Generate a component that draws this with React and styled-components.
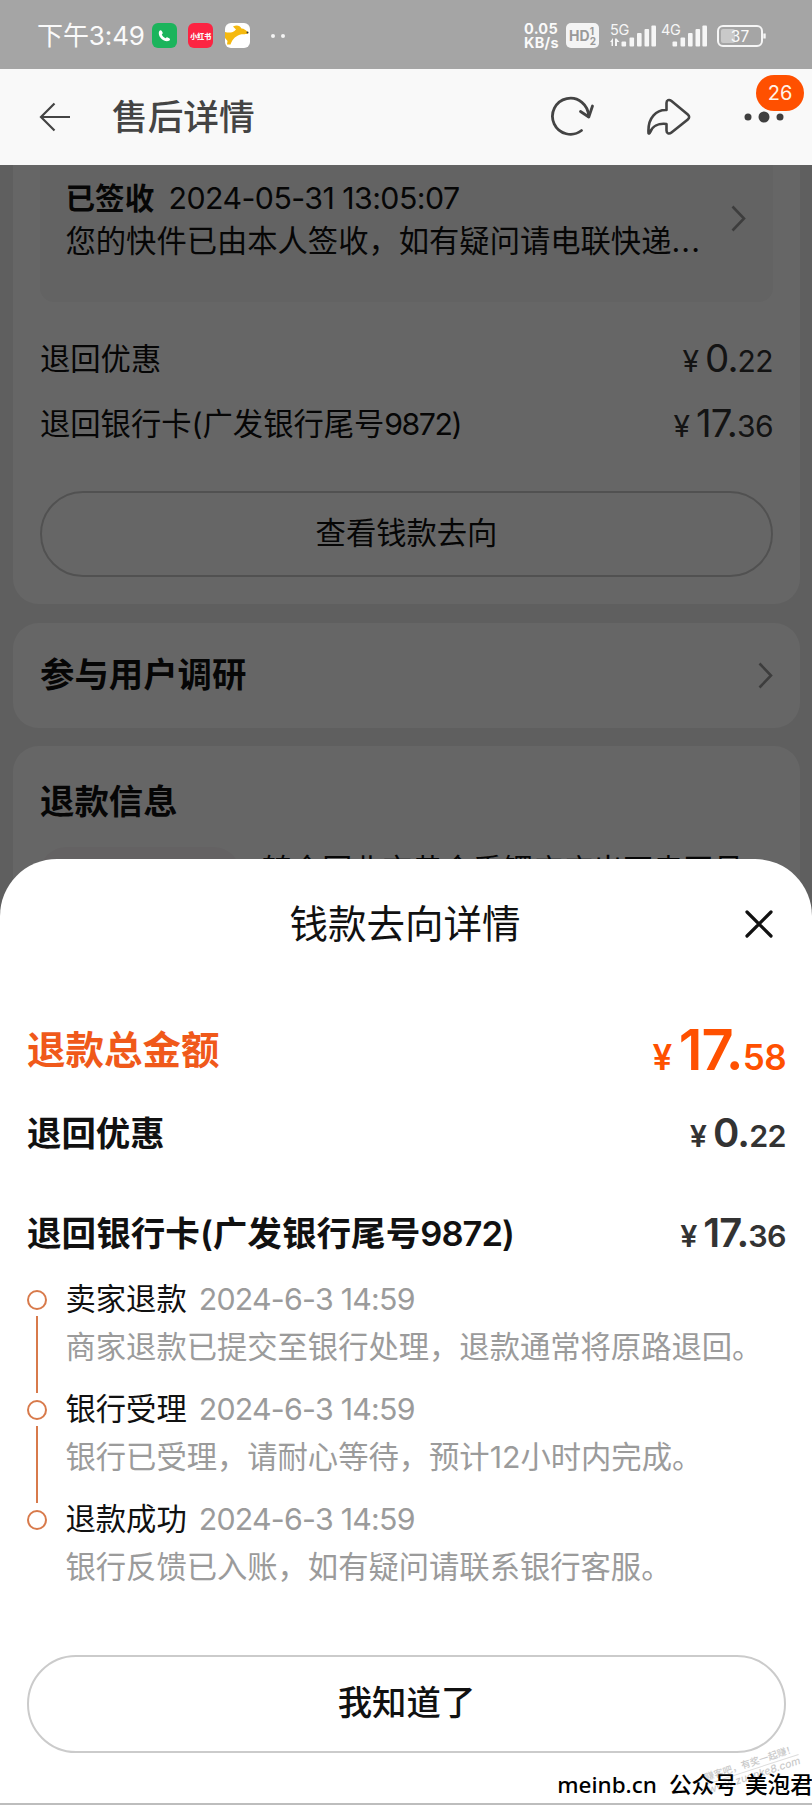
import React from "react";
import styled, { createGlobalStyle } from "styled-components";

const Colors = {
  white: "#fff",
  black: "#111",
  nav: "#444",
  grey: "#9b9b9b",
  price: "#333",
  orange: "#f0591a",
  badge: "#ff5000",
  line: "#d87a4b",
  border: "#cbcbcb"
};

const GlobalStyle = createGlobalStyle`
  * {
    box-sizing: border-box;
  }
  body {
    margin: 0;
    font-family: Inter, "Noto Sans CJK SC", sans-serif;
    color: ${Colors.black};
  }
  svg {
    display: block;
    flex: none;
  }
`;

const Screen = styled.div`
  position: relative;
  display: flex;
  flex-direction: column;
  width: 812px;
  height: 1805px;
  overflow: hidden;
  background: #eee;
`;

/* status bar */

const StatusBar = styled.header`
  display: flex;
  align-items: center;
  height: 69px;
  flex: none;
  padding: 2px 45px 0 37px;
  background: #a5a5a5;
  color: #fafafa;
`;

const Clock = styled.span`
  width: 115px;
  font-size: 26px;
  line-height: 30px;
  letter-spacing: -0.1px;
  white-space: nowrap;
`;

const AppIcon = styled.span`
  display: flex;
  align-items: center;
  justify-content: center;
  width: 25px;
  height: 25px;
  margin-right: 11.3px;
  border-radius: 6px;
  overflow: hidden;
  background: ${props => props.$bg};
  font-size: 7px;
  font-weight: 900;
  white-space: nowrap;
`;

const MoreApps = styled.span`
  display: flex;
  gap: 6px;
  margin-left: 10px;
  & i {
    width: 4px;
    height: 4px;
    border-radius: 50%;
    background: #f4f4f4;
  }
`;

const StatusRight = styled.div`
  display: flex;
  align-items: center;
  margin-left: auto;
`;

const NetSpeed = styled.span`
  display: flex;
  flex-direction: column;
  width: 36px;
  margin-right: 6px;
  font-size: 14.5px;
  font-weight: 700;
  line-height: 14px;
  letter-spacing: 0.3px;
  white-space: nowrap;
`;

const HdBadge = styled.span`
  display: flex;
  align-items: center;
  justify-content: center;
  width: 33px;
  height: 25px;
  margin-right: 11px;
  border-radius: 5px;
  background: #f4f4f4;
  color: #999;
  font-size: 14px;
  font-weight: 700;
  & small {
    font-size: 10px;
    line-height: 10px;
  }
`;

const Signals = styled.div`
  display: flex;
  gap: 5px;
  margin-right: 10px;
`;

/* nav bar */

const NavBar = styled.nav`
  display: flex;
  align-items: center;
  height: 96px;
  flex: none;
  padding: 0 28px 0 39px;
  background: #f9f9f9;
  color: ${Colors.nav};
`;

const NavTitle = styled.h1`
  margin: 0 0 0 41px;
  font-size: 35.7px;
  line-height: 48px;
  font-weight: 500;
`;

const NavActions = styled.div`
  display: flex;
  align-items: center;
  gap: 51px;
  margin-left: auto;
`;

const MoreButton = styled.div`
  position: relative;
  display: flex;
  align-items: center;
  width: 40px;
`;

const Badge = styled.span`
  position: absolute;
  left: 12px;
  bottom: 12px;
  width: 48px;
  height: 36px;
  border-radius: 18px;
  background: ${Colors.badge};
  color: #fff3e8;
  font-size: 20px;
  line-height: 36px;
  text-align: center;
`;

/* page under the mask */

const Content = styled.main`
  position: relative;
  display: flex;
  flex-direction: column;
  flex: 1;
  gap: 18.5px;
  min-height: 0;
  padding: 0 12px 0 13px;
  overflow: hidden;
`;

const Mask = styled.div`
  position: absolute;
  top: 0;
  right: 0;
  bottom: 0;
  left: 0;
  background: rgba(0, 0, 0, 0.6);
`;

const Card = styled.section`
  flex: none;
  height: ${props => props.$height}px;
  padding: 0 27px;
  border-radius: ${props => (props.$first ? "0 0 26px 26px" : "26px")};
  background: ${Colors.white};
`;

const Express = styled.div`
  display: flex;
  justify-content: space-between;
  height: 137px;
  padding: 12px 27px 0 25.5px;
  border-radius: 0 0 14px 14px;
  background: #f7f7f7;
  & svg {
    margin-top: 28px;
  }
`;

const ExpressText = styled.div`
  font-size: 30.3px;
  line-height: 43px;
  white-space: nowrap;
  & b {
    display: inline-block;
    width: 103px;
    font-size: 29.6px;
  }
  & span {
    letter-spacing: -0.55px;
  }
  & i {
    font-style: normal;
    letter-spacing: 1.2px;
  }
`;

const Row = styled.div`
  display: flex;
  align-items: center;
  justify-content: space-between;
  height: ${props => props.$height}px;
  padding-top: ${props => props.$offset || 0}px;
  font-size: ${props => props.$size || 30.3}px;
  font-weight: ${props => (props.$strong ? 600 : 400)};
  line-height: 50px;
  white-space: nowrap;
  color: ${props => props.$color || Colors.black};
  & em {
    font-style: normal;
    letter-spacing: ${props => (props.$strong ? "-1px" : "-1.5px")};
  }
`;

const ButtonOutline = styled.button`
  display: block;
  width: 100%;
  height: ${props => props.$height}px;
  margin-top: ${props => props.$top || 0}px;
  padding: 0 0 2px;
  border: 2px solid ${Colors.border};
  border-radius: 50px;
  background: transparent;
  font-family: inherit;
  font-size: ${props => props.$size}px;
  font-weight: ${props => (props.$strong ? 500 : 400)};
  line-height: 50px;
  color: ${Colors.black};
`;

const Product = styled.div`
  display: flex;
  gap: 22px;
  height: 200px;
`;

const Thumb = styled.div`
  width: 200px;
  height: 200px;
  border-radius: 26px;
  background: #faf6f7;
`;

const ProductName = styled.span`
  margin-top: 4px;
  font-size: 30.1px;
  line-height: 36px;
  white-space: nowrap;
`;

/* bottom sheet */

const Sheet = styled.section`
  position: absolute;
  left: 0;
  right: 0;
  bottom: 0;
  height: 946px;
  padding: 0 26px 0 27px;
  border-radius: 57px 57px 0 0;
  border-bottom: 2px solid #bdbdbd;
  background: ${Colors.white};
`;

const SheetHeader = styled.div`
  display: flex;
  align-items: center;
  justify-content: flex-end;
  height: 129px;
  padding-right: 12px;
  & h2 {
    flex: 1;
    margin: 0;
    padding-left: 39px;
    font-size: 38.5px;
    font-weight: 400;
    line-height: 50px;
    text-align: center;
  }
`;

const PriceText = styled.span`
  display: flex;
  align-items: baseline;
  margin-top: ${props => props.$drop || 0}px;
  color: ${props => props.$color || Colors.price};
  font-size: ${props => props.$small}px;
  font-weight: ${props => props.$weight || 400};
  line-height: 50px;
  letter-spacing: -0.6px;
  & i {
    margin-right: ${props => props.$gap || 6.5}px;
    font-style: normal;
  }
  & b {
    font-size: ${props => props.$big}px;
    font-weight: inherit;
    letter-spacing: -0.9px;
  }
`;

const Steps = styled.ol`
  margin: -34px 0 0;
  padding: 0;
  list-style: none;
`;

const Step = styled.li`
  display: flex;
  height: 110px;
  font-size: 30.3px;
`;

const Track = styled.div`
  display: flex;
  flex-direction: column;
  align-items: center;
  width: 20px;
  margin-right: 18.5px;
  padding-top: 14.5px;
`;

const Dot = styled.span`
  width: 20px;
  height: 20px;
  flex: none;
  border: 2.5px solid ${Colors.line};
  border-radius: 50%;
`;

const Connector = styled.span`
  width: 2.5px;
  height: 77px;
  margin-top: 6px;
  flex: none;
  background: ${Colors.line};
`;

const StepBody = styled.div`
  line-height: 48px;
  white-space: nowrap;
`;

const StepTime = styled.time`
  margin-left: 12px;
  color: ${Colors.grey};
  letter-spacing: -0.75px;
`;

const StepText = styled.div`
  color: ${Colors.grey};
`;

const Footer = styled.footer`
  position: absolute;
  right: -1px;
  bottom: 1px;
  display: flex;
  font-family: "Noto Sans", "Noto Sans CJK SC", sans-serif;
  font-size: 22.7px;
  font-weight: 500;
  line-height: 34px;
  color: #000;
  white-space: nowrap;
  & span {
    margin-right: 12px;
    font-size: 22.5px;
  }
  & span + span {
    margin-right: 8px;
    font-size: inherit;
  }
`;

const Stamp = styled.div`
  position: absolute;
  right: 11px;
  bottom: 21px;
  color: #c9c9c9;
  font-size: 9.5px;
  font-weight: 500;
  line-height: 12px;
  text-align: center;
  white-space: nowrap;
  transform: rotate(-18deg);
  & div + div {
    border-top: 1px solid #ddd;
    font-size: 10.5px;
    font-style: italic;
  }
`;

const steps = [
  {
    title: "卖家退款",
    time: "2024-6-3 14:59",
    text: "商家退款已提交至银行处理，退款通常将原路退回。"
  },
  {
    title: "银行受理",
    time: "2024-6-3 14:59",
    text: "银行已受理，请耐心等待，预计12小时内完成。"
  },
  {
    title: "退款成功",
    time: "2024-6-3 14:59",
    text: "银行反馈已入账，如有疑问请联系银行客服。"
  }
];

const Price = ({ whole, cents, ...rest }) => (
  <PriceText {...rest}>
    <i>¥</i>
    <b>{whole}.</b>
    {cents}
  </PriceText>
);

const Chevron = () => (
  <svg width="15" height="27" viewBox="0 0 15 27" fill="none">
    <path d="M1.5 1.5L13 13.5L1.5 25.5" stroke="#999" strokeWidth="2.6" />
  </svg>
);

const Signal = ({ label, data }) => (
  <svg width="46" height="34" viewBox="0 0 46 34" fill="#f6f6f6">
    <text x="0" y="15.5" fontSize="14.5" fontFamily="Inter" letterSpacing="-0.4">
      {label}
    </text>
    {data && <path d="M0 23l3-4v8H1.500v-4zM5 19.500h1.500l3 3.500H7v4H5z" />}
    <rect x="11.5" y="22.5" width="4.6" height="5" rx="1" />
    <rect x="19.5" y="18.5" width="4.6" height="9" rx="1" />
    <rect x="27" y="14" width="4.6" height="13.5" rx="1" />
    <rect x="34.5" y="10" width="4.6" height="17.500" rx="1" />
    <rect x="41.4" y="6.5" width="4.6" height="21" rx="1" />
  </svg>
);

const Battery = () => (
  <svg width="50" height="22" viewBox="0 0 50 22" fill="none">
    <rect x="1" y="1" width="44" height="20" rx="5" stroke="#f6f6f6" strokeWidth="2" />
    <rect x="4" y="4" width="14" height="14" rx="2" fill="#c9c9c9" />
    <path d="M47.5 8.5v5" stroke="#f6f6f6" strokeWidth="2.4" />
    <text x="23" y="16.7" fill="#fafafa" fontSize="15.5" fontFamily="Inter" textAnchor="middle">
      37
    </text>
  </svg>
);

const Status = () => (
  <StatusBar>
    <Clock>下午3:49</Clock>
    <AppIcon $bg="#1bb45c">
      <svg width="13" height="13" viewBox="0 0 13 13" fill="#fff">
        <path d="M1.2 2.2C2 .9 3.1.8 3.8 2l.8 1.5c.4.8-.5 1.5-.8 2 .8 1.8 2 3 3.8 3.7.5-.3 1.3-1.2 2-.8l1.6.9c1.2.7 1 1.8-.2 2.5C6 14-1 7 1.2 2.200z" />
      </svg>
    </AppIcon>
    <AppIcon $bg="#fc2442">小红书</AppIcon>
    <AppIcon $bg="#fff">
      <svg width="25" height="25" viewBox="0 0 25 25">
        <path
          d="M0 9c4 1 8 1 11-2.500L8 3.500c4-2 7-.8 8.500 2 2.500 0 4.500 1.500 7 4.500-2 1.800-4.500.8-7 1.300-5 1-9 4.500-11 10.200H2l.5-3.500L0 15z"
          fill="#f5b90f"
        />
        <circle cx="22.500" cy="9.500" r="1" fill="#333" />
      </svg>
    </AppIcon>
    <MoreApps>
      <i />
      <i />
    </MoreApps>
    <StatusRight>
      <NetSpeed>
        <span>0.05</span>
        <span>KB/s</span>
      </NetSpeed>
      <HdBadge>
        HD
        <small>
          1<br />2
        </small>
      </HdBadge>
      <Signals>
        <Signal label="5G" data />
        <Signal label="4G" />
      </Signals>
      <Battery />
    </StatusRight>
  </StatusBar>
);

const Nav = () => (
  <NavBar>
    <svg width="32" height="30" viewBox="0 0 32 30" fill="none" stroke="#444" strokeWidth="2.2">
      <path d="M15.5 1.5L2 15l13.5 13.5M2 15h29" />
    </svg>
    <NavTitle>售后详情</NavTitle>
    <NavActions>
      <svg
        width="46"
        height="44"
        viewBox="0 0 46 44"
        fill="none"
        stroke="#444"
        strokeWidth="2.8"
        strokeLinecap="round"
        strokeLinejoin="round"
      >
        <path d="M31.5 35.5A18 18 0 1 1 38.5 21.5" />
        <path d="M30.5 16.5L38.8 22L42.5 11" />
      </svg>
      <svg
        width="46"
        height="40"
        viewBox="0 0 46 40"
        fill="none"
        stroke="#444"
        strokeWidth="2.6"
        strokeLinejoin="round"
      >
        <path d="M1.5 36C.5 20 10 12.500 19.500 13V6c0-3 2.500-4 5-2l16.300 13.500c1.800 1.500 1.800 3.500 0 5L24.500 35.500c-2.500 2-5 1-5-2V27C11 26 5 29.500 3 35.500c-.4 1-1.400 1.500-1.500.5z" />
      </svg>
      <MoreButton>
        <svg width="40" height="12" viewBox="0 0 40 12" fill="#3f3f3f">
          <circle cx="4" cy="6" r="3.5" />
          <circle cx="20" cy="6" r="5.5" />
          <circle cx="36" cy="6" r="3.5" />
        </svg>
        <Badge>26</Badge>
      </MoreButton>
    </NavActions>
  </NavBar>
);

const App = () => (
  <Screen>
    <GlobalStyle />
    <Status />
    <Nav />
    <Content>
      <Card $first $height={439}>
        <Express>
          <ExpressText>
            <b>已签收</b>
            <span>2024-05-31 13:05:07</span>
            <br />
            您的快件已由本人签收，如有疑问请电联快递<i>...</i>
          </ExpressText>
          <Chevron />
        </Express>
        <Row $height={114}>
          退回优惠
          <Price whole="0" cents="22" $small={30} $big={38.5} />
        </Row>
        <Row $height={16}>
          <span>
            退回银行卡(广发银行尾号<em>9872</em>)
          </span>
          <Price whole="17" cents="36" $small={30} $big={38.5} />
        </Row>
        <ButtonOutline $top={59} $height={86} $size={30.3}>
          查看钱款去向
        </ButtonOutline>
      </Card>
      <Card $height={105}>
        <Row $strong $height={105} $size={34.4}>
          参与用户调研
          <Chevron />
        </Row>
      </Card>
      <Card $height={320}>
        <Row $strong $height={101} $offset={11} $size={34.4}>
          退款信息
        </Row>
        <Product>
          <Thumb />
          <ProductName>转全国北京黄金手镯店店出不卖网吕</ProductName>
        </Product>
      </Card>
      <Mask />
    </Content>

    <Sheet>
      <SheetHeader>
        <h2>钱款去向详情</h2>
        <svg width="30" height="30" viewBox="0 0 30 30" stroke="#111" strokeWidth="3.2" strokeLinecap="round">
          <path d="M3 3L27 27M27 3L3 27" />
        </svg>
      </SheetHeader>
      <Row $strong $height={123} $size={38.5} $color={Colors.orange}>
        退款总金额
        <Price
          whole="17"
          cents="58"
          $small={35}
          $big={56}
          $weight={600}
          $color={Colors.badge}
          $gap={7}
          $drop={7}
        />
      </Row>
      <Row $strong $height={46} $size={34.4}>
        退回优惠
        <Price whole="0" cents="22" $small={30.5} $big={40} $weight={600} $drop={1} />
      </Row>
      <Row $strong $height={152} $size={34.6}>
        <span>
          退回银行卡(广发银行尾号<em>9872</em>)
        </span>
        <Price whole="17" cents="36" $small={30.5} $big={40} $weight={600} $drop={3} />
      </Row>
      <Steps>
        {steps.map((step, index) => (
          <Step key={step.title}>
            <Track>
              <Dot />
              {index < steps.length - 1 && <Connector />}
            </Track>
            <StepBody>
              {step.title}
              <StepTime>{step.time}</StepTime>
              <StepText>{step.text}</StepText>
            </StepBody>
          </Step>
        ))}
      </Steps>
      <ButtonOutline $strong $top={50} $height={98} $size={34.4}>
        我知道了
      </ButtonOutline>
      <Stamp>
        <div>赚客吧，有奖一起赚！</div>
        <div>www.zuanke8.com</div>
      </Stamp>
      <Footer>
        <span>meinb.cn</span>
        <span>公众号</span>
        美泡君
      </Footer>
    </Sheet>
  </Screen>
);

export default App;
